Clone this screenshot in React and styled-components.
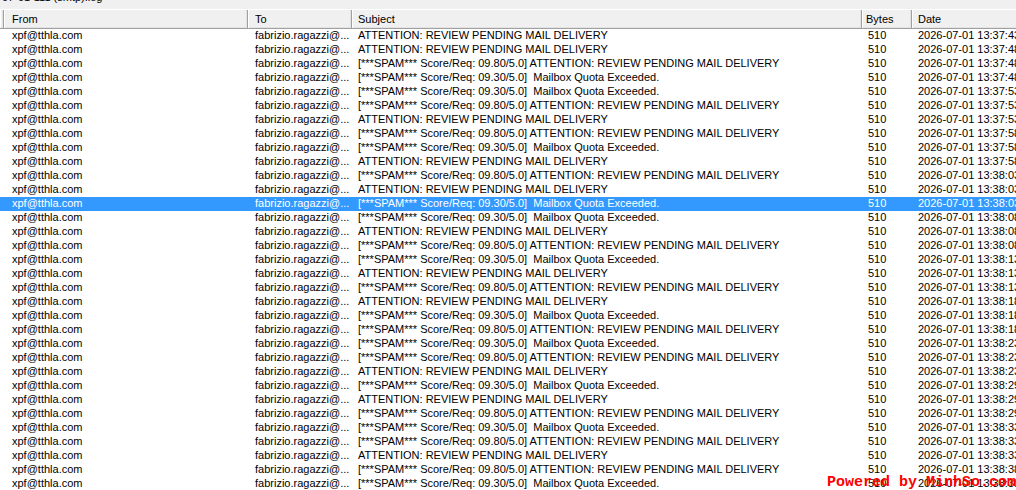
import React from 'react'
import styled, { createGlobalStyle } from 'styled-components'

const GlobalStyle = createGlobalStyle`
  html, body {
    margin: 0;
    padding: 0;
    background: #ffffff;
    overflow: hidden;
  }
  body {
    font-family: "Liberation Sans", Arial, sans-serif;
    font-size: 11px;
    color: #000;
  }
`

const ATT = 'ATTENTION: REVIEW PENDING MAIL DELIVERY'
const SPAM_ATT = '[***SPAM*** Score/Req: 09.80/5.0] ATTENTION: REVIEW PENDING MAIL DELIVERY'
const SPAM_QUOTA = '[***SPAM*** Score/Req: 09.30/5.0]  Mailbox Quota Exceeded.'

const rows = [
  [ATT, '13:37:43'],
  [ATT, '13:37:48'],
  [SPAM_ATT, '13:37:48'],
  [SPAM_QUOTA, '13:37:48'],
  [SPAM_QUOTA, '13:37:53'],
  [SPAM_ATT, '13:37:53'],
  [ATT, '13:37:53'],
  [SPAM_ATT, '13:37:58'],
  [SPAM_QUOTA, '13:37:58'],
  [ATT, '13:37:58'],
  [SPAM_ATT, '13:38:03'],
  [ATT, '13:38:03'],
  [SPAM_QUOTA, '13:38:03'],
  [SPAM_QUOTA, '13:38:08'],
  [ATT, '13:38:08'],
  [SPAM_ATT, '13:38:08'],
  [SPAM_QUOTA, '13:38:13'],
  [ATT, '13:38:13'],
  [SPAM_ATT, '13:38:13'],
  [ATT, '13:38:18'],
  [SPAM_QUOTA, '13:38:18'],
  [SPAM_ATT, '13:38:18'],
  [SPAM_QUOTA, '13:38:23'],
  [SPAM_ATT, '13:38:23'],
  [ATT, '13:38:23'],
  [SPAM_QUOTA, '13:38:29'],
  [ATT, '13:38:29'],
  [SPAM_ATT, '13:38:29'],
  [SPAM_QUOTA, '13:38:33'],
  [SPAM_ATT, '13:38:33'],
  [ATT, '13:38:33'],
  [SPAM_ATT, '13:38:38'],
  [SPAM_QUOTA, '13:38:38'],
]

const SELECTED = 12
const COLS = '4px 244px 104px 510px 50px 200px'

export default function App() {
  return (
    <Page>
      <GlobalStyle />
      <TitleStrip>
        <TitleText>07-01-111 (smtp).log</TitleText>
      </TitleStrip>
      <HeaderRow>
        <HeaderCell />
        <HeaderCell pad={8}>From</HeaderCell>
        <HeaderCell pad={7}>To</HeaderCell>
        <HeaderCell pad={6}>Subject</HeaderCell>
        <HeaderCell pad={4}>Bytes</HeaderCell>
        <HeaderCell pad={6}>Date</HeaderCell>
      </HeaderRow>
      <List>
        {rows.map(([subject, time], i) => (
          <Row key={i} selected={i === SELECTED}>
            <Cell />
            <Cell pad={8}>xpf@tthla.com</Cell>
            <Cell pad={7}>fabrizio.ragazzi@...</Cell>
            <Cell pad={6}>{subject}</Cell>
            <Cell pad={6}>510</Cell>
            <Cell pad={6}>2026-07-01 {time}</Cell>
          </Row>
        ))}
      </List>
      <Watermark>Powered by MinhSo.com</Watermark>
    </Page>
  )
}

const Page = styled.div`
  position: relative;
  width: 1016px;
  height: 490px;
  overflow: hidden;
  background: #fff;
`

const TitleStrip = styled.div`
  height: 9px;
  background: #f0f0f0;
  overflow: hidden;
`

const TitleText = styled.div`
  margin-top: -9px;
  padding-left: 2px;
  line-height: 13px;
  color: #000;
  white-space: nowrap;
`

const HeaderRow = styled.div`
  display: grid;
  grid-template-columns: ${COLS};
  height: 18px;
  background: #f0f0f0;
  border-top: 1px solid #ffffff;
  border-bottom: 1px solid #a0a0a0;
`

const HeaderCell = styled.div`
  padding-left: ${p => (p.pad || 0) - 1}px;
  line-height: 18px;
  white-space: nowrap;
  overflow: hidden;
  border-left: 1px solid #ffffff;
  border-right: 1px solid #a0a0a0;
  box-shadow: inset -1px -1px 0 #e3e3e3;
`

const List = styled.div`
  display: flex;
  flex-direction: column;
`

const Row = styled.div`
  display: grid;
  grid-template-columns: ${COLS};
  height: 14px;
  line-height: 13px;
  background: ${p => (p.selected ? '#3399ff' : 'transparent')};
  color: ${p => (p.selected ? '#ffffff' : '#000000')};
`

const Cell = styled.div`
  padding-left: ${p => p.pad || 0}px;
  white-space: pre;
  overflow: hidden;
`

const Watermark = styled.div`
  position: absolute;
  right: 0;
  bottom: 0;
  font-family: "Liberation Mono", monospace;
  font-weight: bold;
  font-size: 15px;
  line-height: 14px;
  color: #ff0000;
  white-space: nowrap;
`
